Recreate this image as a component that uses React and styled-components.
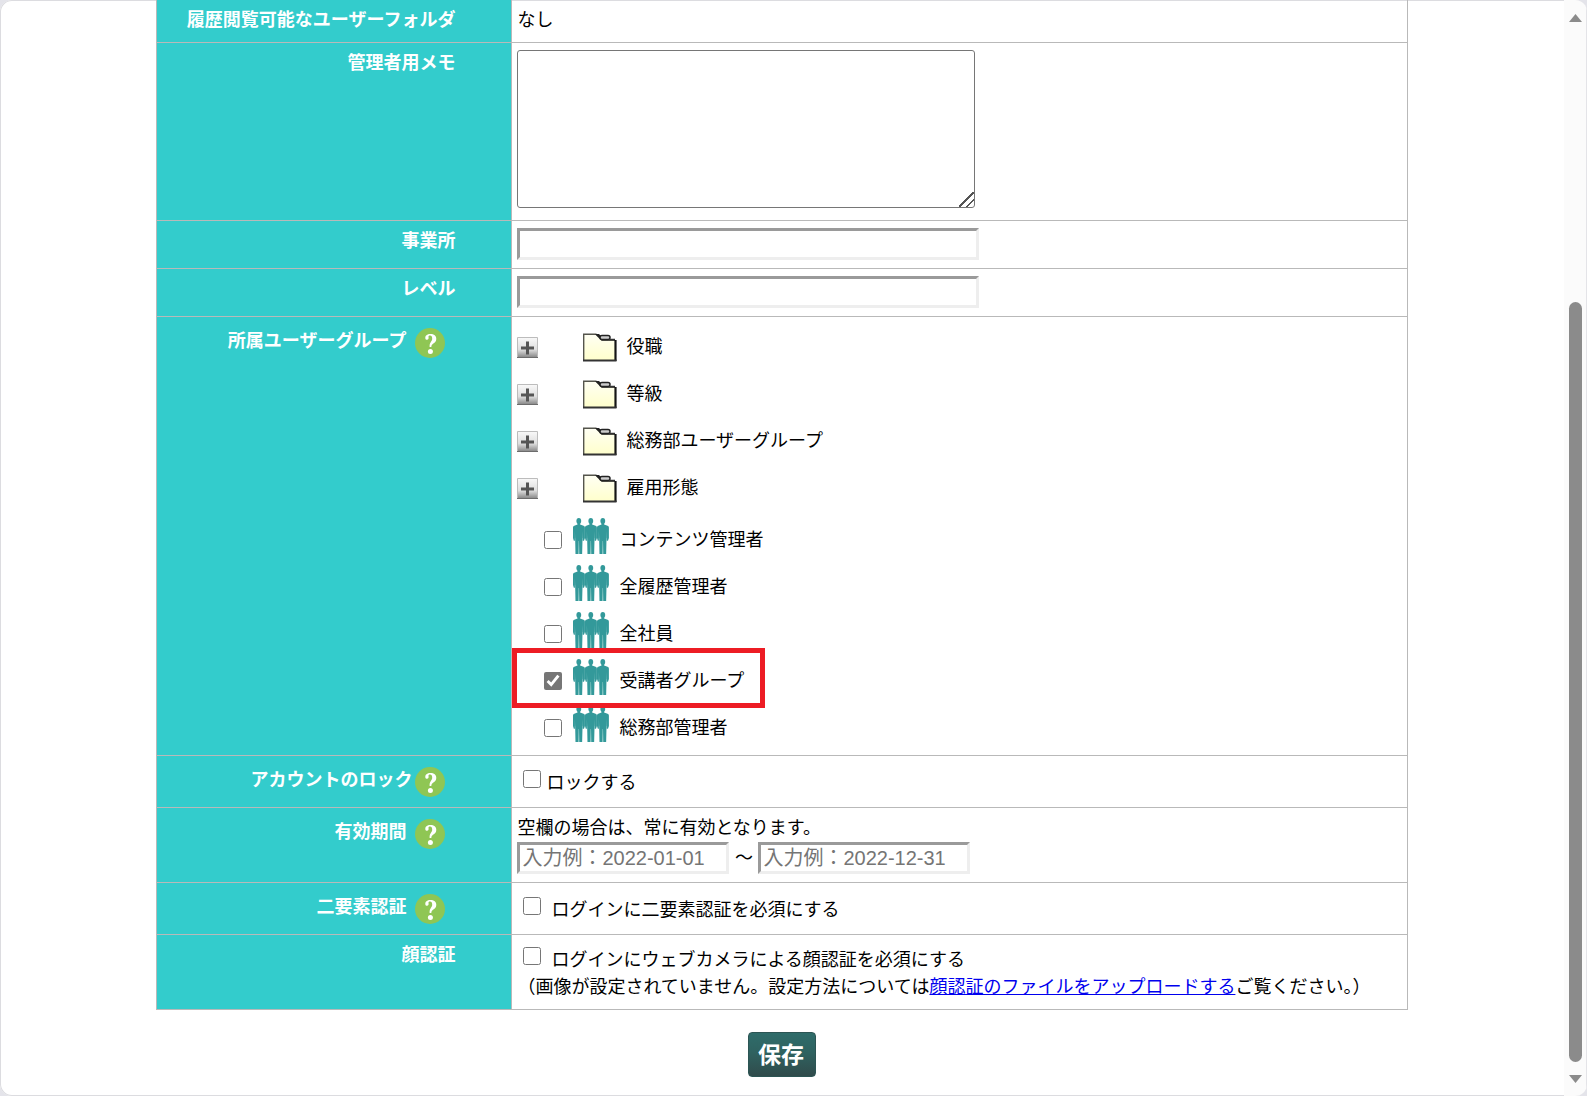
import React, { useState } from 'react';
import styled, { createGlobalStyle } from 'styled-components';

const GlobalStyle = createGlobalStyle`
  * {
    box-sizing: border-box;
  }

  body {
    margin: 0;
    background-color: #e4e4ea;
    color: #000;
    font-family: "Liberation Sans", "Noto Sans CJK JP", sans-serif;
    font-size: 18px;
    line-height: 27px;
  }
`;

const Window = styled.div`
  display: flex;
  min-height: 100vh;
  background-color: #fff;
  border-radius: 12px;
  box-shadow: inset 0 0 0 1px #dcdce0;
  overflow: hidden;
`;

const Content = styled.main`
  flex: 1;
  min-width: 0;
  padding-bottom: 18px;
`;

const FormTable = styled.table`
  width: 80%;
  margin: 0 auto;
  border-collapse: separate;
  border-spacing: 0;
`;

const LabelCell = styled.th`
  width: 356px;
  padding: 7px 56px 6px 6px;
  border: 1px solid #b9b9b9;
  border-top: none;
  background-color: #33cccc;
  color: #fff;
  font-weight: bold;
  text-align: right;
  vertical-align: top;
`;

const ValueCell = styled.td`
  padding: 7px 5px 8px;
  border: 1px solid #b9b9b9;
  border-width: 0 1px 1px 0;
  vertical-align: top;
`;

const HelpLabel = styled.div`
  display: flex;
  justify-content: flex-end;
  align-items: flex-start;
  gap: ${(props) => (props.$tight ? '3px' : '9px')};
  padding: 4px 10px 0 0;
`;

const HelpButton = styled.button`
  display: block;
  width: 30px;
  height: 30px;
  padding: 0;
  border: none;
  background: none;
  cursor: pointer;
`;

const Memo = styled.textarea`
  display: block;
  width: 458px;
  max-width: 100%;
  height: 158px;
  margin-bottom: 4px;
  border: 1px solid #767676;
  border-radius: 3px;
  font: inherit;

  &::-webkit-resizer {
    background: linear-gradient(
      135deg,
      transparent 45%,
      #555 46%,
      #555 54%,
      transparent 55%,
      transparent 70%,
      #555 71%,
      #555 79%,
      transparent 80%
    );
  }
`;

const TextInput = styled.input`
  display: block;
  width: ${(props) => (props.$short ? '212px' : '462px')};
  max-width: 100%;
  height: 32px;
  padding: 0 2px;
  border: 3px solid;
  border-color: #9a9a9a #eee #eee #9a9a9a;
  background-color: #fff;
  font-family: inherit;
  font-size: 20px;

  &::placeholder {
    color: #757575;
  }
`;

const Checkbox = styled.input`
  flex: none;
  width: 18px;
  height: 18px;
  margin: 0;
  accent-color: #767676;
`;

const GroupTree = styled.ul`
  margin: 0;
  padding: 0;
  list-style: none;
`;

const FolderRow = styled.li`
  display: flex;
  align-items: center;
  height: 47px;
`;

const ExpandButton = styled.button`
  width: 21px;
  height: 21px;
  margin-right: 45px;
  padding: 0;
  border: none;
  background: none;
  cursor: pointer;

  svg {
    display: block;
  }
`;

const FolderName = styled.span`
  padding-left: 9px;
`;

const GroupRow = styled.li`
  position: relative;
  height: 47px;
`;

const GroupLabel = styled.label`
  display: flex;
  align-items: center;
  height: 47px;
  padding-left: 27px;

  ${Checkbox} {
    margin: 8px 11px 0 0;
  }
`;

const GroupName = styled.span`
  padding: 10px 0 0 10px;
`;

const Highlight = styled.div`
  position: absolute;
  z-index: 1;
  top: -5px;
  left: -5px;
  width: 253px;
  height: 60px;
  border: 5px solid #ed1c24;
  pointer-events: none;
`;

const CheckLabel = styled.label`
  display: flex;
  align-items: center;
  gap: ${(props) => (props.$wide ? '10px' : '5px')};
  height: ${(props) => (props.$compact ? '32px' : '36px')};
  padding-left: 6px;

  ${Checkbox} {
    margin-bottom: 4px;
  }
`;

const CheckText = styled.span`
  padding-top: 4px;
`;

const Period = styled.div`
  display: flex;
  align-items: center;
`;

const Tilde = styled.span`
  width: 29px;
  text-align: center;
`;

const Actions = styled.div`
  display: flex;
  justify-content: center;
  padding-top: 22px;
`;

const SaveButton = styled.button`
  width: 68px;
  height: 45px;
  padding: 0 2px 3px 0;
  border: 1px solid #2c5554;
  border-radius: 4px;
  background: linear-gradient(#2f6c6a, #2f6260 45%, #304b4b);
  color: #fff;
  font-family: inherit;
  font-size: 23px;
  font-weight: bold;
  cursor: pointer;
`;

const Scrollbar = styled.div`
  flex: none;
  display: flex;
  flex-direction: column;
  align-items: center;
  width: 23px;
  padding: 14px 0 13px;
  border: solid #e4e4e8;
  border-width: 0 1px 0 0;
  background-color: #fbfbfb;

  svg {
    display: block;
  }
`;

const Track = styled.div`
  flex: 1;
  display: flex;
  flex-direction: column;
  padding: 3px 0 13px;
`;

const TrackSpace = styled.div`
  flex: 277;
`;

const Thumb = styled.div`
  flex: 760;
  width: 13px;
  border-radius: 7px;
  background-color: #8b8b8b;
`;

function HelpIcon() {
  return (
    <svg width="30" height="30" viewBox="0 0 30 30" aria-hidden="true">
      <circle cx="15" cy="15" r="15" fill="#8fc654" />
      <path
        d="M10.4 10.8C9.900 7.600 12.200 6.100 15.400 6.100c3.700 0 5.900 1.900 5.900 4.800 0 2.600-1.700 3.700-3.300 4.900-1.100.8-1.600 1.700-1.700 3.200h-1.700c-.1-2.100.2-3.500 1.100-4.800.8-1.200 1.500-1.900 1.500-3.400 0-2-.8-3.200-2.200-3.200-1.100 0-1.700.6-1.500 1.500.4 1.500-.2 2.700-1.500 2.700-.8 0-1.400-.3-1.600-1z"
        fill="#fff"
      />
      <circle cx="15.4" cy="23.4" r="2.5" fill="#fff" />
    </svg>
  );
}

function PlusIcon() {
  return (
    <svg width="21" height="21" viewBox="0 0 21 21" aria-hidden="true">
      <defs>
        <linearGradient id="plusFace" x1="0" y1="0" x2="0" y2="1">
          <stop offset="0" stopColor="#fafafa" />
          <stop offset="0.6" stopColor="#dedede" />
          <stop offset="1" stopColor="#808080" />
        </linearGradient>
      </defs>
      <rect width="21" height="21" fill="url(#plusFace)" />
      <path d="M.5 21V.5H20.5V21" fill="none" stroke="#bcbcbc" />
      <path d="M0 20.5H21" stroke="#6c6c6c" />
      <path d="M10.5 4.500v13M4 11h13" stroke="#555" strokeWidth="3" />
    </svg>
  );
}

function FolderIcon() {
  return (
    <svg width="34" height="29" viewBox="0 0 34 29" aria-hidden="true">
      <defs>
        <linearGradient id="folderFace" x1="0" y1="0" x2="0" y2="1">
          <stop offset="0" stopColor="#fffff4" />
          <stop offset="1" stopColor="#ffffcc" />
        </linearGradient>
      </defs>
      <path d="M1 1h12l6 6h13v20H1z" fill="url(#folderFace)" />
      <path d="M.7 28V1.200H13l6 6h13" fill="none" stroke="#55554c" strokeWidth="1.400" />
      <path d="M12 1h4l5 5-3 .8z" fill="#222" />
      <rect x="17" y="2.500" width="10" height="4" rx="2" fill="#ccc" stroke="#222" strokeWidth="1.500" />
      <path d="M26 6.500h6" stroke="#333" strokeWidth="1.500" />
      <path d="M32.500 7v21" stroke="#151515" strokeWidth="2.200" />
      <path d="M0 27.500h33.500" stroke="#333" strokeWidth="1.800" />
    </svg>
  );
}

function PeopleIcon() {
  return (
    <svg width="36" height="36" viewBox="0 0 36 36" aria-hidden="true">
      {[0, 12, 24].map((x) => (
        <g key={x} transform={`translate(${x} 0)`}>
          <path d="M.6 9h10.400v11H.6zM2.600 20h6.500v16H2.600z" fill="#9fd3d0" />
          <g fill="#33999a">
            <ellipse cx="5.800" cy="2.900" rx="2.400" ry="2.900" />
            <path d="M4.500 5h2.600v1.500l3.400 1.200c1 .3 1.400 1.100 1.400 2v10.400l-.9 2.700H9.800V13l-.3 8-.4 15H6.400L6 23h-.4l-.4 13H2.600L2.200 21 1.900 13v9.800H.8L0 20.100V9.700c0-.9.400-1.700 1.300-2l3.200-1.200z" />
          </g>
        </g>
      ))}
    </svg>
  );
}

const folders = ['役職', '等級', '総務部ユーザーグループ', '雇用形態'];

const groups = ['コンテンツ管理者', '全履歴管理者', '全社員', '受講者グループ', '総務部管理者'];

const highlighted = '受講者グループ';

function WithHelp({ children, tight }) {
  return (
    <HelpLabel $tight={tight}>
      <span>{children}</span>
      <HelpButton type="button" aria-label={`${children}のヘルプ`}>
        <HelpIcon />
      </HelpButton>
    </HelpLabel>
  );
}

function App() {
  const [selected, setSelected] = useState([highlighted]);

  const toggleGroup = (name) => {
    setSelected((prev) =>
      prev.includes(name) ? prev.filter((item) => item !== name) : [...prev, name]
    );
  };

  return (
    <>
      <GlobalStyle />
      <Window>
        <Content>
          <form onSubmit={(e) => e.preventDefault()}>
            <FormTable>
              <tbody>
                <tr>
                  <LabelCell scope="row">履歴閲覧可能なユーザーフォルダ</LabelCell>
                  <ValueCell>なし</ValueCell>
                </tr>
                <tr>
                  <LabelCell scope="row">
                    <label htmlFor="memo">管理者用メモ</label>
                  </LabelCell>
                  <ValueCell>
                    <Memo id="memo" />
                  </ValueCell>
                </tr>
                <tr>
                  <LabelCell scope="row">
                    <label htmlFor="office">事業所</label>
                  </LabelCell>
                  <ValueCell>
                    <TextInput id="office" type="text" />
                  </ValueCell>
                </tr>
                <tr>
                  <LabelCell scope="row">
                    <label htmlFor="level">レベル</label>
                  </LabelCell>
                  <ValueCell>
                    <TextInput id="level" type="text" />
                  </ValueCell>
                </tr>
                <tr>
                  <LabelCell scope="row">
                    <WithHelp>所属ユーザーグループ</WithHelp>
                  </LabelCell>
                  <ValueCell>
                    <GroupTree>
                      {folders.map((name) => (
                        <FolderRow key={name}>
                          <ExpandButton type="button" aria-label={`${name}を開く`}>
                            <PlusIcon />
                          </ExpandButton>
                          <FolderIcon />
                          <FolderName>{name}</FolderName>
                        </FolderRow>
                      ))}
                      {groups.map((name) => (
                        <GroupRow key={name}>
                          <GroupLabel>
                            <Checkbox
                              type="checkbox"
                              checked={selected.includes(name)}
                              onChange={() => toggleGroup(name)}
                            />
                            <PeopleIcon />
                            <GroupName>{name}</GroupName>
                          </GroupLabel>
                          {name === highlighted && <Highlight />}
                        </GroupRow>
                      ))}
                    </GroupTree>
                  </ValueCell>
                </tr>
                <tr>
                  <LabelCell scope="row">
                    <WithHelp tight>アカウントのロック</WithHelp>
                  </LabelCell>
                  <ValueCell>
                    <CheckLabel>
                      <Checkbox type="checkbox" />
                      <CheckText>ロックする</CheckText>
                    </CheckLabel>
                  </ValueCell>
                </tr>
                <tr>
                  <LabelCell scope="row">
                    <WithHelp>有効期間</WithHelp>
                  </LabelCell>
                  <ValueCell>
                    <div>空欄の場合は、常に有効となります。</div>
                    <Period>
                      <TextInput
                        $short
                        type="text"
                        aria-label="有効期間の開始日"
                        placeholder="入力例：2022-01-01"
                      />
                      <Tilde>～</Tilde>
                      <TextInput
                        $short
                        type="text"
                        aria-label="有効期間の終了日"
                        placeholder="入力例：2022-12-31"
                      />
                    </Period>
                  </ValueCell>
                </tr>
                <tr>
                  <LabelCell scope="row">
                    <WithHelp>二要素認証</WithHelp>
                  </LabelCell>
                  <ValueCell>
                    <CheckLabel $wide>
                      <Checkbox type="checkbox" />
                      <CheckText>ログインに二要素認証を必須にする</CheckText>
                    </CheckLabel>
                  </ValueCell>
                </tr>
                <tr>
                  <LabelCell scope="row">顔認証</LabelCell>
                  <ValueCell>
                    <CheckLabel $wide $compact>
                      <Checkbox type="checkbox" />
                      <CheckText>ログインにウェブカメラによる顔認証を必須にする</CheckText>
                    </CheckLabel>
                    <div>
                      （画像が設定されていません。設定方法については
                      <a href="#face-upload">顔認証のファイルをアップロードする</a>
                      ご覧ください。）
                    </div>
                  </ValueCell>
                </tr>
              </tbody>
            </FormTable>
            <Actions>
              <SaveButton type="submit">保存</SaveButton>
            </Actions>
          </form>
        </Content>
        <Scrollbar aria-hidden="true">
          <svg width="13" height="8" viewBox="0 0 13 8">
            <path d="M6.5 0L13 8H0z" fill="#8b8b8b" />
          </svg>
          <Track>
            <TrackSpace />
            <Thumb />
          </Track>
          <svg width="13" height="8" viewBox="0 0 13 8">
            <path d="M0 0h13L6.5 8z" fill="#8b8b8b" />
          </svg>
        </Scrollbar>
      </Window>
    </>
  );
}

export default App;
